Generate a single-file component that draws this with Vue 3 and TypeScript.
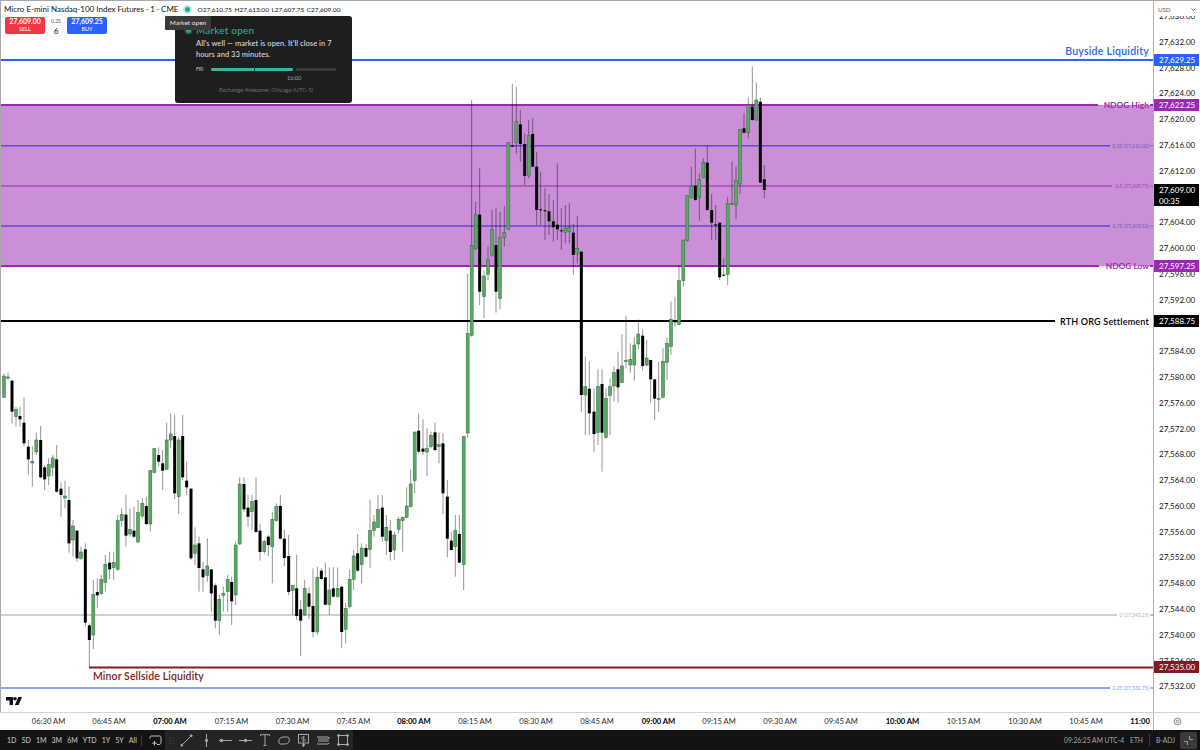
<script setup lang="ts">
type Raw = [number, number, number, number, number, string]
interface Group { x0: number; y0: number; items: Raw[] }

const groups: Group[] = [
  { x0: 0, y0: 360, items: [
    [12,40,112,48,112,'g'],[24,38,60,51,54,'g'],[36,60,190,62,155,'b'],[48,140,200,148,170,'g'],[60,140,200,168,178,'b'],
    [72,112,258,188,250,'b'],[85,240,345,260,298,'b'],[97,258,380,304,309,'g'],[109,218,285,240,276,'g'],[122,198,355,240,352,'b'],
    [134,315,390,322,358,'b'],[146,295,375,314,348,'g'],[158,285,350,294,322,'g'],[170,255,398,298,395,'b'],[183,368,470,386,405,'b'],
    [195,362,445,408,414,'g'],[207,380,578,420,550,'b'],[219,480,590,498,540,'g'],[231,510,605,512,595,'b'],[243,560,600,576,595,'g'],
    [256,550,800,568,788,'b'],[268,790,921,796,840,'b'],[280,660,868,704,825,'g'],[292,655,745,696,706,'b'],[304,645,705,658,700,'g'],
    [316,585,695,613,668,'g'],[329,575,658,608,628,'b'],[341,575,660,607,623,'g'],[353,465,632,482,628,'g'],[365,445,500,464,482,'g'],
    [378,405,560,464,527,'b'],[390,445,530,508,522,'g'],[402,440,535,512,530,'b'],[414,420,550,458,546,'g'],[427,415,475,430,468,'g'],
    [439,410,495,438,492,'b'],[451,330,515,332,492,'g'],[463,265,340,266,337,'g'],[476,262,320,285,305,'b'],[488,270,390,310,332,'b'],
    [500,188,330,240,328,'g'],[512,160,265,222,240,'g'],[524,165,418,228,400,'b'],[536,232,462,240,410,'g'],[548,165,360,228,352,'b'],
    [560,305,405,362,382,'b'],[573,385,600,386,595,'b'],[585,502,615,555,580,'g'],[597,530,695,550,624,'b'],[609,605,695,628,652,'b'],
    [622,535,665,618,646,'g'],[634,628,755,628,700,'b'],[646,670,805,676,782,'b'],[658,705,825,718,782,'g'],[670,680,755,700,706,'g'],
    [683,645,755,658,695,'g'],[695,650,795,666,724,'b'],[707,545,735,555,705,'g'],[719,352,555,372,552,'g']
  ] },
  { x0: 240, y0: 400, items: [
    [12,232,335,252,328,'b'],[24,285,380,323,350,'b'],[36,285,390,305,335,'g'],[48,232,398,300,396,'b'],[60,372,482,392,456,'b'],
    [73,420,460,425,455,'g'],[85,405,468,410,435,'b'],[97,335,550,358,440,'g'],[109,310,365,320,362,'g'],[121,285,418,318,416,'b'],
    [133,390,498,416,474,'b'],[146,405,585,468,576,'b'],[158,556,645,556,572,'g'],[170,464,660,565,648,'b'],[182,600,768,628,662,'b'],
    [194,540,648,565,645,'g'],[207,562,658,580,620,'b'],[219,505,712,618,696,'b'],[232,500,705,532,696,'g'],[244,505,540,512,537,'b'],
    [256,488,616,532,614,'b'],[268,502,645,570,614,'g'],[280,502,592,565,590,'b'],[293,502,592,565,590,'g'],[305,558,745,560,696,'b'],
    [317,608,730,625,688,'g'],[329,508,625,538,620,'g'],[341,450,570,468,538,'g'],[353,402,515,460,512,'b'],[365,430,550,444,494,'g'],
    [378,432,472,444,470,'b'],[390,300,505,392,448,'g'],[402,345,410,366,392,'g'],[414,285,385,328,383,'g'],[427,285,425,323,410,'b'],
    [439,345,465,382,422,'g'],[451,360,482,392,456,'b'],[463,395,480,405,450,'g'],[476,350,400,358,388,'g'],[488,350,455,352,362,'g'],
    [500,262,355,318,352,'g'],[512,208,322,252,320,'g'],[524,96,280,96,242,'g'],[536,40,160,92,155,'b'],[549,58,165,146,155,'b'],
    [561,85,228,146,156,'g'],[573,95,145,106,140,'g'],[585,68,155,97,150,'b'],[597,98,190,134,140,'g'],[609,100,342,130,280,'b'],
    [622,240,472,290,416,'b'],[634,395,452,422,450,'b'],[646,345,530,392,440,'g'],[658,345,490,402,488,'b'],[671,108,570,110,494,'g']
  ] },
  { x0: 450, y0: 70, items: [
    [53,612,1104,790,1089,'g'],[65,90,800,527,796,'g'],[77,395,540,434,535,'g'],[89,295,705,434,665,'b'],[102,600,745,618,680,'g'],
    [114,530,630,570,613,'g'],[126,420,560,478,555,'g'],[138,415,728,525,665,'b'],[150,425,718,502,686,'g'],[163,408,530,488,502,'g'],
    [175,217,480,218,478,'g'],[187,42,230,227,229,'b'],[199,50,252,154,218,'g'],[211,120,275,163,222,'b'],[224,190,345,222,318,'b'],
    [236,150,325,196,318,'g'],[248,145,292,192,290,'b'],[260,245,465,290,420,'b'],[272,305,465,418,421,'b'],[285,355,510,421,423,'b'],
    [297,372,495,424,454,'b'],[310,390,515,454,472,'b'],[322,280,510,464,478,'b'],[334,415,540,481,483,'b'],[346,405,520,474,488,'g'],
    [358,400,520,473,484,'g'],[370,462,615,488,555,'b'],[382,438,580,535,550,'g'],[394,545,1025,545,975,'b']
  ] },
  { x0: 570, y0: 250, items: [
    [46,320,555,410,435,'g'],[58,335,555,416,490,'b'],[72,415,605,485,552,'b'],[84,358,585,410,548,'g'],[96,358,665,402,548,'b'],
    [108,415,565,445,562,'g'],[120,385,555,410,436,'g'],[132,350,455,368,408,'g'],[144,305,458,358,412,'b'],[156,252,400,348,398,'g'],
    [168,198,355,332,334,'g'],[181,280,368,328,345,'g'],[193,262,392,285,345,'g'],[205,208,298,252,282,'g'],[218,238,362,257,348,'b'],
    [230,270,350,324,345,'g'],[242,330,458,330,388,'b'],[254,388,510,388,446,'b'],[266,335,485,445,447,'g'],[279,295,445,334,442,'g'],
    [291,262,390,280,338,'g'],[303,155,315,208,290,'g'],[315,140,230,214,217,'b'],[327,45,225,92,224,'g']
  ] },
  { x0: 450, y0: 70, items: [
    [700,510,650,510,632,'g'],[712,375,515,376,512,'g'],[724,290,385,348,382,'g'],[736,236,392,347,390,'b'],[748,310,452,328,382,'g'],
    [760,265,325,278,323,'g'],[772,226,422,278,420,'b'],[785,372,510,420,458,'b'],[797,405,510,463,466,'b'],[809,458,630,458,622,'b'],
    [821,565,620,614,617,'b'],[833,380,645,400,613,'g'],[846,275,405,401,403,'g'],[858,290,447,332,405,'g'],[870,178,372,178,342,'g'],
    [882,130,190,175,188,'b'],[895,82,205,105,188,'g'],[907,-10,152,110,150,'b'],[919,38,152,90,150,'g'],[931,82,340,95,338,'b'],
    [943,285,385,328,360,'b']
  ] }
]

const candles = groups.flatMap((g) =>
  g.items.map((c, i) => ({
    id: `${g.x0}-${g.y0}-${i}`,
    x: g.x0 + c[0] / 3,
    wt: g.y0 + c[1] / 3,
    wb: g.y0 + c[2] / 3,
    bt: g.y0 + c[3] / 3,
    bh: Math.max((c[4] - c[3]) / 3, 1),
    green: c[5] === 'g'
  }))
)

const lines = [
  { y: 60, color: '#2962ff', w: 2, start: 0, end: 1153 },
  { y: 105, color: '#9c27b0', w: 2, start: 0, end: 1098 },
  { y: 145.75, color: '#6a45d6', w: 1.4, start: 0, end: 1110 },
  { y: 186, color: '#9c27b0', w: 1.2, start: 0, end: 1112 },
  { y: 226, color: '#6a45d6', w: 1.4, start: 0, end: 1110 },
  { y: 266, color: '#9c27b0', w: 2, start: 0, end: 1099 },
  { y: 321, color: '#000000', w: 2, start: 0, end: 1055 },
  { y: 615, color: '#a3a3a3', w: 1, start: 0, end: 1117 },
  { y: 667.5, color: '#7f1d23', w: 2, start: 89, end: 1153 },
  { y: 688, color: '#5b8cff', w: 1.5, start: 0, end: 1110 }
]

const ticks = [145.75, 186, 226, 615, 688]

const lineLabels = [
  { text: 'Buyside Liquidity', y: 50.5, cls: 'big', color: '#2962ff' },
  { text: 'NDOG High', y: 105, cls: 'mid', color: '#9c2bb2' },
  { text: 'NDOG Low', y: 266, cls: 'mid', color: '#9c2bb2' },
  { text: 'RTH ORG Settlement', y: 321, cls: 'rth', color: '#000000' },
  { text: '0.25 (27,616.00)', y: 145.5, cls: 'small', color: '#7a55d0' },
  { text: '0.5 (27,609.75)', y: 186, cls: 'small', color: '#a040b0' },
  { text: '0.75 (27,603.50)', y: 226, cls: 'small', color: '#7a55d0' },
  { text: '0 (27,543.25)', y: 615, cls: 'small', color: '#b5b5b5' },
  { text: '0.25 (27,531.75)', y: 688, cls: 'small', color: '#6d98ff' }
]

const hiddenTicks = [27608, 27588]
const priceTicks = Array.from({ length: 27 }, (_, i) => 27636 - i * 4)
  .filter((value) => !hiddenTicks.includes(value))
  .map((value) => ({
    text: `${String(value).slice(0, 2)},${String(value).slice(2)}.00`,
    y: 40.8 + (27632 - value) * 6.445
  }))

const priceTags = [
  { text: '27,629.25', y: 60, h: 12, bg: '#2962ff' },
  { text: '27,622.25', y: 105, h: 12, bg: '#9c27b0' },
  { text: '27,597.25', y: 266, h: 12, bg: '#9c27b0' },
  { text: '27,588.75', y: 321, h: 12, bg: '#000000' },
  { text: '27,535.00', y: 667, h: 12, bg: '#801922' }
]

const timeLabels = [
  { t: '06:30 AM', x: 48.5 }, { t: '06:45 AM', x: 109 }, { t: '07:00 AM', x: 170, b: true }, { t: '07:15 AM', x: 231.5 },
  { t: '07:30 AM', x: 292.5 }, { t: '07:45 AM', x: 353.5 }, { t: '08:00 AM', x: 414, b: true }, { t: '08:15 AM', x: 475 },
  { t: '08:30 AM', x: 536 }, { t: '08:45 AM', x: 597 }, { t: '09:00 AM', x: 658.5, b: true }, { t: '09:15 AM', x: 719 },
  { t: '09:30 AM', x: 780 }, { t: '09:45 AM', x: 841 }, { t: '10:00 AM', x: 902.5, b: true }, { t: '10:15 AM', x: 963.5 },
  { t: '10:30 AM', x: 1025 }, { t: '10:45 AM', x: 1086 }, { t: '11:00', x: 1140, b: true }
]

const ranges = ['1D', '5D', '1M', '3M', '6M', 'YTD', '1Y', '5Y', 'All']
</script>

<template>
  <div class="app">
    <div class="main">
      <div class="pane">
        <svg class="plot" width="1153" height="712" viewBox="0 0 1153 712">
          <rect x="0" y="105" width="1153" height="161" fill="#ca8fd6" />
          <line
            v-for="l in lines"
            :key="l.y"
            :x1="l.start"
            :x2="l.end"
            :y1="l.y"
            :y2="l.y"
            :stroke="l.color"
            :stroke-width="l.w"
          />
          <line v-for="t in ticks" :key="'t' + t" x1="1150.5" x2="1153" :y1="t" :y2="t" stroke="#7a55d0" />
          <line x1="1150" x2="1153" y1="105" y2="105" stroke="#9c27b0" stroke-width="2" />
          <line x1="1150" x2="1153" y1="266" y2="266" stroke="#9c27b0" stroke-width="2" />
          <g v-for="c in candles" :key="c.id">
            <line :x1="c.x" :x2="c.x" :y1="c.wt" :y2="c.wb" stroke="#000" stroke-opacity="0.42" stroke-width="1" />
            <rect
              :x="c.x - 1.5"
              :y="c.bt"
              width="3"
              :height="c.bh"
              :fill="c.green ? '#5aa965' : '#000'"
              :stroke="c.green ? '#2f6b3c' : 'none'"
              stroke-width="0.5"
            />
          </g>
        </svg>

        <span
          v-for="l in lineLabels"
          :key="l.text"
          class="line-label"
          :class="l.cls"
          :style="{ top: l.y + 'px', color: l.color }"
        >{{ l.text }}</span>
        <span class="sell-label">Minor Sellside Liquidity</span>

        <div class="legend">
          <span class="title">Micro E-mini Nasdaq-100 Index Futures · 1 · CME</span>
          <span class="status"><i></i></span>
          <span class="ohlc">O27,610.75</span>
          <span class="ohlc">H27,613.00</span>
          <span class="ohlc">L27,607.75</span>
          <span class="ohlc">C27,609.00</span>
        </div>

        <div class="trade">
          <div class="btn sell"><b>27,609.00</b><small>SELL</small></div>
          <div class="qty"><small>0.25</small><span>6</span></div>
          <div class="btn buy"><b>27,609.25</b><small>BUY</small></div>
        </div>

        <div class="popover">
          <div class="pop-head"><i></i>Market open</div>
          <p>All's well — market is open. It'll close in 7 hours and 33 minutes.</p>
          <div class="session">
            <span>FRI</span>
            <div class="bar"><div class="bar-on"></div><div class="bar-mark"></div><div class="bar-off"></div></div>
          </div>
          <div class="close-time">16:00</div>
          <div class="zone">Exchange timezone: Chicago (UTC-5)</div>
        </div>
        <div class="tip">Market open</div>

        <svg class="logo" width="16" height="8" viewBox="0 0 16 8" fill="#131313">
          <path d="M0 0h7v8H3.5V3.4H0z" />
          <circle cx="9" cy="1.8" r="1.8" />
          <path d="M12.4 0H16L12.6 8H8.9z" />
        </svg>
      </div>

      <div class="price-axis">
        <span v-for="p in priceTicks" :key="p.text" class="price" :style="{ top: p.y + 'px' }">{{ p.text }}</span>
        <span
          v-for="t in priceTags"
          :key="t.text"
          class="tag"
          :style="{ top: t.y - t.h / 2 + 'px', height: t.h + 'px', background: t.bg }"
        >{{ t.text }}</span>
        <div class="tag-now"><span>27,609.00</span><span>00:35</span></div>
        <div class="currency">
          <span>USD</span>
          <svg width="5" height="3" viewBox="0 0 5 3"><path d="M0.5 .5 2.5 2.5 4.5 .5" fill="none" stroke="#666" /></svg>
        </div>
      </div>
    </div>

    <div class="time-row">
      <div class="time-axis">
        <span
          v-for="t in timeLabels"
          :key="t.t"
          class="time"
          :class="{ bold: t.b }"
          :style="{ left: t.x + 'px' }"
        >{{ t.t }}</span>
      </div>
      <div class="corner">
        <svg width="9" height="9" viewBox="0 0 9 9">
          <circle cx="4.5" cy="4.5" r="3.4" fill="none" stroke="#666" stroke-width=".8" />
          <circle cx="4.5" cy="4.5" r="1.4" fill="none" stroke="#666" stroke-width=".8" />
        </svg>
      </div>
    </div>

    <div class="toolbar">
      <div class="ranges">
        <span v-for="r in ranges" :key="r">{{ r }}</span>
      </div>
      <div class="sep"></div>
      <svg class="compare" width="13" height="11" viewBox="0 0 13 11" fill="none" stroke="#c4c4c4" stroke-width="1">
        <path d="M1 3.5V2.2C1 1.5 1.5 1 2.2 1H10.5C11.5 1 12 1.6 12 2.5V7.5C12 8.6 11.4 9.5 10 9.5H8" />
        <path d="M5.5 6v4.5M3.2 8.2h4.6" />
      </svg>
      <div class="tools">
        <svg width="5" height="7" viewBox="0 0 5 7" fill="#555"><circle cx="1" cy="1" r=".6"/><circle cx="4" cy="1" r=".6"/><circle cx="1" cy="3.5" r=".6"/><circle cx="4" cy="3.5" r=".6"/><circle cx="1" cy="6" r=".6"/><circle cx="4" cy="6" r=".6"/></svg>
        <svg width="13" height="13" viewBox="0 0 13 13" fill="none" stroke="#a8a8a8"><path d="M2.5 10.5 10.5 2.5"/><circle cx="1.8" cy="11.2" r="1" fill="#a8a8a8"/><circle cx="11.2" cy="1.8" r="1" fill="#a8a8a8"/></svg>
        <svg width="5" height="13" viewBox="0 0 5 13" fill="none" stroke="#a8a8a8"><path d="M2.5 0V13"/><circle cx="2.5" cy="6.5" r="1.2" fill="#a8a8a8"/></svg>
        <svg width="13" height="5" viewBox="0 0 13 5" fill="none" stroke="#a8a8a8"><path d="M0 2.5H13"/><circle cx="2.5" cy="2.5" r="1.3" fill="#a8a8a8"/></svg>
        <svg width="13" height="5" viewBox="0 0 13 5" fill="none" stroke="#a8a8a8"><path d="M0 2.5H13"/><circle cx="6.5" cy="2.5" r="1.3" fill="#a8a8a8"/></svg>
        <svg width="10" height="12" viewBox="0 0 10 12" fill="none" stroke="#a8a8a8"><path d="M.5 2V.7H9.5V2M5 .7V11.5M3.5 11.5H6.5"/></svg>
        <svg width="12" height="9" viewBox="0 0 12 9" fill="none" stroke="#a8a8a8"><path d="M.7 6C.7 2.5 3 1 6 1h3.5C11 1 11.5 3 11.2 5 11 7 9 8 7 8H2.5C1.2 8 .7 7 .7 6z"/></svg>
        <svg width="11" height="13" viewBox="0 0 11 13" fill="none" stroke="#a8a8a8"><rect x=".5" y=".5" width="10" height="8.5"/><path d="M5.5 9v4"/><circle cx="5.5" cy="11" r="1" fill="#a8a8a8"/><path d="M7 3H4.5a1 1 0 0 0 0 2h2a1 1 0 0 1 0 2H4M5.5 2v6" stroke-width=".7"/></svg>
        <svg width="13" height="11" viewBox="0 0 13 11" fill="none" stroke="#a8a8a8"><path d="M0 2H11L12.5 3 11 4H1M1 6H12M0 9H11L12.5 8"/></svg>
        <svg width="12" height="12" viewBox="0 0 12 12" fill="none" stroke="#a8a8a8"><rect x="1.5" y="1.5" width="9" height="9"/><circle cx="1.5" cy="1.5" r="1" fill="#a8a8a8"/><circle cx="10.5" cy="1.5" r="1" fill="#a8a8a8"/><circle cx="1.5" cy="10.5" r="1" fill="#a8a8a8"/><circle cx="10.5" cy="10.5" r="1" fill="#a8a8a8"/></svg>
      </div>
      <div class="status-right">
        <span>09:26:25 AM UTC-4</span>
        <span>ETH</span>
        <div class="sep small"></div>
        <span>B-ADJ</span>
        <div class="collapse">
          <svg width="9" height="9" viewBox="0 0 9 9" fill="none" stroke="#9a9a9a"><path d="M5.5 0V3.5H9M3.5 9V5.5H0"/></svg>
        </div>
      </div>
    </div>
  </div>
</template>

<style>
html, body { margin: 0; background: #fff; }
</style>

<style scoped>
.app {
  width: 1200px;
  height: 750px;
  display: flex;
  flex-direction: column;
  overflow: hidden;
  font-family: "Lato", "Open Sans", sans-serif;
  color: #131313;
  background: #fff;
}
.main { display: flex; height: 712px; border-top: 1px solid #a8a8a8; box-sizing: border-box; }
.pane { position: relative; width: 1153px; height: 711px; border-left: 1px solid #a8a8a8; box-sizing: border-box; overflow: hidden; flex: none; }
.plot { position: absolute; left: -1px; top: -1px; }
.line-label {
  position: absolute;
  right: 4px;
  transform: translateY(-50%);
  line-height: 1;
  white-space: nowrap;
  margin-top: -1px;
}
.line-label.big { font-size: 10.5px; font-weight: 600; letter-spacing: .25px; }
.line-label.mid { font-size: 8.4px; font-weight: 700; }
.line-label.rth { font-size: 9px; font-weight: 600; letter-spacing: .2px; }
.line-label.small { font-size: 5px; }
.sell-label { position: absolute; left: 92px; top: 669px; font-size: 10.5px; font-weight: 600; letter-spacing: .1px; color: #801922; line-height: 12px; white-space: nowrap; }

.legend { position: absolute; left: 3px; top: 2px; display: flex; align-items: center; height: 12px; white-space: nowrap; font-size: 8px; }
.status { width: 9px; height: 9px; border-radius: 50%; background: #bdebe2; display: flex; align-items: center; justify-content: center; margin: 0 5px 0 5px; }
.status i { width: 5px; height: 5px; border-radius: 50%; background: #22ab94; }
.ohlc { margin-right: 2.5px; font-size: 6.5px; }

.trade { position: absolute; left: 4px; top: 16px; display: flex; gap: 4px; }
.btn { width: 40px; height: 17px; border-radius: 2px; color: #fff; display: flex; flex-direction: column; align-items: center; justify-content: center; line-height: 7.5px; }
.btn b { font-size: 7px; font-weight: 700; }
.btn small { font-size: 5.5px; font-weight: 400; }
.sell { background: #f23645; }
.buy { background: #2962ff; }
.qty { width: 14px; display: flex; flex-direction: column; align-items: center; line-height: 8px; }
.qty small { font-size: 5px; color: #555; }
.qty span { font-size: 8px; height: 10px; width: 12px; text-align: center; line-height: 10px; background: #fff; box-shadow: 0 0 1px #ddd; margin-top: 1px; }

.popover {
  position: absolute;
  left: 174px;
  top: 15px;
  width: 177px;
  height: 87px;
  box-sizing: border-box;
  background: #1e1e1e;
  border-radius: 3px;
  padding: 8px 16px 0 21px;
  color: #d8d8d8;
}
.pop-head { position: relative; font-size: 10px; color: #2fb5a0; line-height: 13px; letter-spacing: .2px; }
.pop-head i { position: absolute; left: -10px; top: 4px; width: 5px; height: 5px; border-radius: 50%; background: #22ab94; box-shadow: 0 0 0 1.5px rgba(34,171,148,.35); }
.popover p { margin: 1px 0 0; font-size: 7.5px; line-height: 11px; font-weight: 500; letter-spacing: .05px; color: #dcdcdc; }
.session { display: flex; align-items: center; gap: 8px; margin-top: 4px; height: 10px; font-size: 5px; color: #c8c8c8; }
.bar { position: relative; display: flex; width: 125px; height: 3px; gap: 3px; }
.bar-on { width: 82px; background: #37b59f; border-radius: 1px; }
.bar-off { width: 40px; background: #3a3a3a; border-radius: 1px; }
.bar-mark { position: absolute; left: 43px; top: -1px; width: 1px; height: 5px; background: #333; }
.close-time { margin: 1px 0 0; padding-left: 91px; font-size: 5.5px; line-height: 7px; color: #a0a0a0; }
.zone { margin-top: 4px; padding-left: 23px; font-size: 5.8px; line-height: 7px; color: #707070; white-space: nowrap; }
.tip { position: absolute; left: 164px; top: 15px; width: 46px; height: 14px; background: #3a3a3a; color: #e4e4e4; font-size: 6.5px; line-height: 14px; text-align: center; border-radius: 1px; }
.logo { position: absolute; left: 5px; top: 696px; }

.price-axis { position: relative; width: 47px; height: 711px; border-left: 1px solid #b0b0b0; box-sizing: border-box; overflow: hidden; font-size: 8px; }
.price { position: absolute; left: 5px; transform: translateY(-50%); line-height: 10px; white-space: nowrap; }
.tag { position: absolute; left: 0; width: 45px; margin-top: -1px; color: #fff; font-size: 8px; line-height: 12px; padding-left: 5px; box-sizing: border-box; white-space: nowrap; }
.tag-now { position: absolute; left: 0; top: 183px; width: 45px; height: 22px; background: #000; color: #fff; padding-left: 5px; box-sizing: border-box; display: flex; flex-direction: column; line-height: 10.5px; white-space: nowrap; padding-top: 1px; }
.currency { position: absolute; left: 1px; top: 1px; width: 44px; height: 14px; background: #fff; border-radius: 3px; display: flex; align-items: center; justify-content: space-between; padding: 0 3px 0 3px; box-sizing: border-box; font-size: 6px; color: #555; box-shadow: 0 0 1px #e0e0e0; }

.time-row { display: flex; height: 18px; border-top: 1px solid #d4d4d4; box-sizing: border-box; }
.time-axis { position: relative; width: 1153px; flex: none; overflow: hidden; }
.time { position: absolute; top: 3px; transform: translateX(-50%); font-size: 7.6px; line-height: 11px; white-space: nowrap; color: #2a2a2a; }
.time.bold { font-weight: 700; color: #000; }
.corner { flex: 1; border-left: 1px solid #b0b0b0; display: flex; align-items: center; justify-content: center; }

.toolbar { height: 20px; background: #131313; display: flex; align-items: center; color: #b8b8b8; font-size: 7px; }
.ranges { display: flex; gap: 0; width: 141px; padding-left: 7px; box-sizing: border-box; justify-content: space-between; padding-right: 4px; font-weight: 500; color: #c0c0c0; }
.sep { width: 1px; height: 11px; background: #3a3a3a; margin-right: 0; }
.compare { margin-left: 7px; margin-right: 3px; }
.tools {
  display: grid;
  grid-template-columns: 12px repeat(9, 19.5px);
  justify-items: center;
  align-items: center;
  width: 188px;
  height: 20px;
  background: #242424;
  box-sizing: border-box;
}
.status-right { margin-left: auto; display: flex; align-items: center; gap: 6px; padding-right: 3px; height: 20px; font-size: 6.7px; color: #a8a8a8; white-space: nowrap; }
.sep.small { height: 12px; }
.collapse { width: 17px; height: 17px; margin-left: -1px; background: #3a3a3a; border-radius: 2px; display: flex; align-items: center; justify-content: center; }
</style>
